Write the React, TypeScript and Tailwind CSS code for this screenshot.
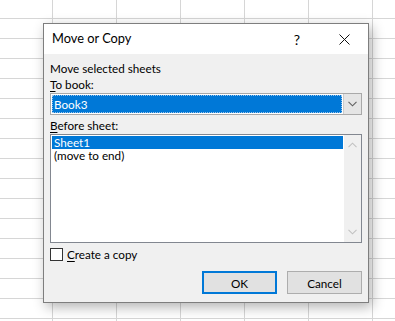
import React from 'react'

const FONT = { fontFamily: 'Lato, "Liberation Sans", sans-serif' }

const ROWS = Array.from({ length: 17 })
const COLS = Array.from({ length: 7 })

function SheetGrid() {
  // spreadsheet cells behind the dialog
  return (
    <div className="absolute left-[-11px] top-[-1px] flex flex-col">
      {ROWS.map((_, r) => (
        <div key={r} className="flex">
          {COLS.map((_, c) => (
            <div key={c} className="w-[64px] h-[20px] border-r border-b border-[#d6d6d6] shrink-0" />
          ))}
        </div>
      ))}
    </div>
  )
}

function Chevron({ up = false, color }: { up?: boolean; color: string }) {
  return (
    <svg width="9" height="6" viewBox="0 0 9 6" className={up ? 'rotate-180' : ''}>
      <path d="M0.5 0.8 L4.5 4.8 L8.5 0.8" fill="none" stroke={color} strokeWidth="1.1" />
    </svg>
  )
}

function Mn({ children }: { children: React.ReactNode }) {
  return <span className="underline underline-offset-[2px] decoration-[1px]">{children}</span>
}

export default function App() {
  return (
    <div className="relative w-[395px] h-[321px] overflow-hidden bg-white text-black" style={FONT}>
      <SheetGrid />

      <div className="absolute left-[43px] top-[23px] w-[326px] h-[280px] flex flex-col border border-[#7e7e7e] bg-[#f0f0f0] shadow-[3px_4px_12px_rgba(0,0,0,0.3)]">
        {/* title bar */}
        <div className="h-[30px] bg-white flex items-center shrink-0">
          <span className="pl-[8px] text-[12.8px] flex-1">Move or Copy</span>
          <span className="text-[14px] w-[14px] text-center mr-[35px]">?</span>
          <svg width="11" height="11" viewBox="0 0 11 11" className="mr-[18px]">
            <path d="M0.5 0.5 L10.5 10.5 M10.5 0.5 L0.5 10.5" stroke="#111" strokeWidth="1" />
          </svg>
        </div>

        {/* body */}
        <div className="flex flex-col px-[6px] pt-[6px] text-[11.7px] leading-[16px]">
          <div>Move selected sheets</div>
          <div><Mn>T</Mn>o book:</div>

          <div className="mt-[1px] h-[22px] border border-[#a9a9a9] bg-white flex p-[1px]">
            <div className="flex-1 bg-[#0078d7] text-white border border-dotted border-[#9ac4ea] flex items-center pl-[1px] leading-[14px]">
              Book3
            </div>
            <div className="w-[18px] ml-[1px] -my-[1px] -mr-[1px] bg-[#e5e5e5] border-l border-[#cccccc] flex items-center justify-center">
              <Chevron color="#606060" />
            </div>
          </div>

          <div className="mt-[2px]"><Mn>B</Mn>efore sheet:</div>

          <div className="mt-[1px] h-[109px] border border-[#828790] bg-white flex">
            <div className="flex-1 p-[1px] leading-[13px]">
              <div className="bg-[#0078d7] text-white pl-[2px] h-[13px] overflow-hidden">Sheet1</div>
              <div className="pl-[2px] h-[13px] overflow-hidden">(move to end)</div>
            </div>
            <div className="w-[17px] bg-[#f0f0f0] flex flex-col items-center justify-between py-[7px]">
              <Chevron up color="#c2c2c2" />
              <Chevron color="#c2c2c2" />
            </div>
          </div>

          <div className="mt-[4px] flex items-center h-[14px]">
            <div className="w-[13px] h-[13px] border border-[#333] bg-white" />
            <span className="ml-[4px]"><Mn>C</Mn>reate a copy</span>
          </div>

          <div className="mt-[10px] flex justify-end gap-[10px]">
            <button className="w-[75px] h-[23px] bg-[#e1e1e1] border-2 border-[#0078d7] text-[11.7px]">OK</button>
            <button className="w-[75px] h-[23px] bg-[#e1e1e1] border border-[#adadad] text-[11.7px]">Cancel</button>
          </div>
        </div>
      </div>
    </div>
  )
}
